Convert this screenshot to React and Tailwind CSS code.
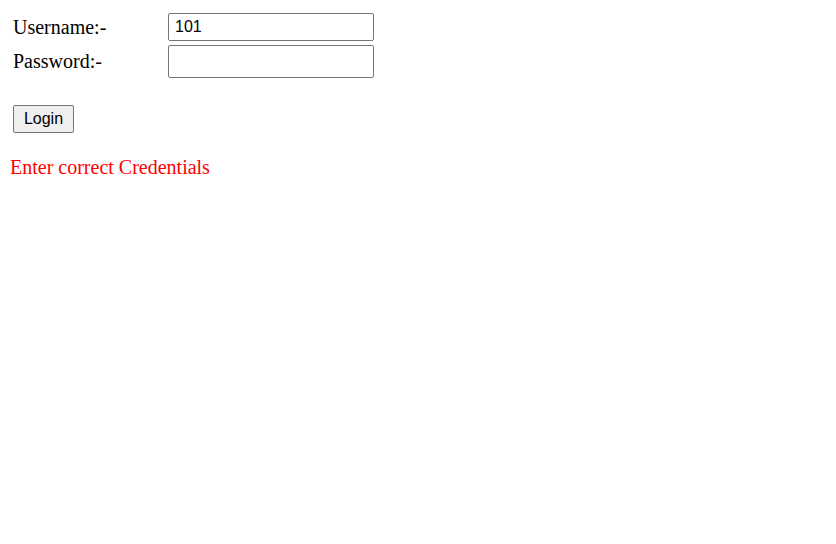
import { useState } from "react";

export default function App() {
  const [username, setUsername] = useState("101");
  const [password, setPassword] = useState("");

  return (
    <div className="min-h-screen bg-white font-['Liberation_Serif','Times_New_Roman',serif] text-black">
      {/* login form */}
      <div className="pl-[13px] pt-[13px]">
        <div className="grid grid-cols-[155px_auto] gap-y-[4px] w-max">
          <label className="flex items-center text-[20px] leading-[23px]">Username:-</label>
          <input
            type="text"
            value={username}
            onChange={(e) => setUsername(e.target.value)}
            className="h-[28px] w-[206px] rounded-[2px] border border-[#767676] px-[6px] font-['Liberation_Sans',Arial,sans-serif] text-[16px] outline-none"
          />
          <label className="flex items-center text-[20px] leading-[23px]">Password:-</label>
          <input
            type="password"
            value={password}
            onChange={(e) => setPassword(e.target.value)}
            className="h-[33px] w-[206px] rounded-[2px] border border-[#767676] px-[6px] font-['Liberation_Sans',Arial,sans-serif] text-[16px] outline-none"
          />
        </div>

        <button className="mt-[27px] h-[28px] w-[61px] rounded-[2px] border border-[#767676] bg-[#efefef] font-['Liberation_Sans',Arial,sans-serif] text-[16px] leading-none">
          Login
        </button>
      </div>

      {/* error message */}
      <p className="ml-[10px] mt-[23px] text-[20px] leading-[23px] text-[#ff0000]">Enter correct Credentials</p>
    </div>
  );
}
